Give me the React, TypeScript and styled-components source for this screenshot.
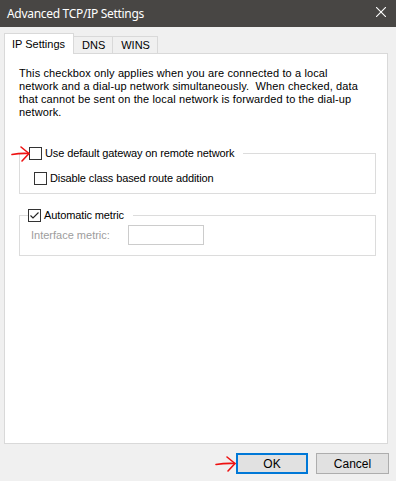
import * as React from "react"
import styled, { createGlobalStyle } from "styled-components"

const GlobalStyle = createGlobalStyle`
html, body {
    margin: 0;
    padding: 0;
    background: #f0f0f0;
}
body {
    font-family: "Liberation Sans", Arial, sans-serif;
    font-size: 11px;
    color: #000;
}
`

const Window = styled("div")`
position: relative;
width: 396px;
height: 481px;
display: flex;
flex-direction: column;
background: #f0f0f0;
overflow: hidden;
`

const TitleBar = styled("div")`
height: 27px;
flex-shrink: 0;
display: flex;
align-items: center;
justify-content: space-between;
padding: 0 10px 0 7px;
background: #484644;
color: #fff;
`

const Title = styled("span")`
font-family: "Noto Sans", "Open Sans", sans-serif;
font-size: 12px;
letter-spacing: -0.3px;
`

const CloseButton = styled("span")`
display: flex;
width: 10px;
height: 10px;
margin-top: -4px;
`

const Body = styled("div")`
flex: 1;
display: flex;
flex-direction: column;
padding: 7px 8px 0 4px;
`

const TabStrip = styled("div")`
display: flex;
align-items: flex-end;
height: 20px;
position: relative;
z-index: 1;
`

const Tab = styled("div")<{ $active?: boolean }>`
box-sizing: border-box;
height: ${p => (p.$active ? "21px" : "18px")};
padding: ${p => (p.$active ? "4px 8px 0 7px" : "2px 7px 0 8px")};
margin-left: ${p => (p.$active ? "0" : "-1px")};
border: 1px solid #d9d9d9;
border-bottom: ${p => (p.$active ? "none" : "1px solid #d9d9d9")};
background: ${p => (p.$active ? "#fff" : "#f0f0f0")};
white-space: nowrap;
font-size: 11px;
line-height: 13px;

&:first-child + & {
    margin-left: 0;
    border-left: none;
}
`

const Panel = styled("div")`
box-sizing: border-box;
width: 384px;
height: 391px;
margin-top: -1px;
border: 1px solid #d9d9d9;
background: #fff;
padding: 13px 11px 0 14px;
display: flex;
flex-direction: column;
`

const Description = styled("p")`
margin: 0;
white-space: nowrap;
line-height: 13px;
letter-spacing: 0.12px;
`

const Group = styled("fieldset")<{ $gap: number }>`
box-sizing: border-box;
width: 357px;
margin: ${p => p.$gap}px 0 0 0;
padding: 0;
border: 1px solid #dcdcdc;
min-inline-size: 0;
`

const Legend = styled("legend")<{ $indent: number }>`
display: flex;
align-items: center;
margin-left: ${p => p.$indent}px;
padding: 0 9px 0 0;
line-height: 13px;
`

const Row = styled("div")<{ $indent: number; $top: number; $bottom: number }>`
display: flex;
align-items: center;
padding: ${p => p.$top}px 0 ${p => p.$bottom}px ${p => p.$indent}px;
`

const CheckRow = styled("label")`
display: flex;
align-items: center;
gap: 3px;
line-height: 13px;
letter-spacing: -0.12px;
`

const Box = styled("span")`
box-sizing: border-box;
display: inline-flex;
width: 13px;
height: 13px;
border: 1px solid #333;
background: #fff;
flex-shrink: 0;
`

const MutedLabel = styled("span")`
color: #9d9d9d;
width: 97px;
`

const MetricInput = styled("span")`
box-sizing: border-box;
display: inline-block;
width: 76px;
height: 20px;
border: 1px solid #cccccc;
background: #fff;
`

const Footer = styled("div")`
display: flex;
justify-content: flex-end;
gap: 8px;
margin-top: 9px;
margin-right: -1px;
`

const Button = styled("span")<{ $primary?: boolean }>`
box-sizing: border-box;
display: flex;
align-items: center;
justify-content: center;
width: ${p => (p.$primary ? "72px" : "73px")};
height: 21px;
background: #e1e1e1;
border: ${p => (p.$primary ? "2px solid #0078d7" : "1px solid #adadad")};
font-size: 12px;
`

const Arrow = styled("svg")<{ $x: number; $y: number }>`
position: absolute;
left: ${p => p.$x}px;
top: ${p => p.$y}px;
z-index: 2;
overflow: visible;
`

const Checkbox: React.FunctionComponent<{ checked?: boolean; label: string }> = ({ checked, label }) => {
    return <CheckRow>
        <Box>
            {checked && <svg width="11" height="11" viewBox="0 0 11 11">
                <path d="M1.5 5.5 L4 8 L9.5 2.5" fill="none" stroke="#222" strokeWidth="1.1" />
            </svg>}
        </Box>
        <span>{label}</span>
    </CheckRow>
}

const RedArrow: React.FunctionComponent<{ x: number; y: number; length: number }> = ({ x, y, length }) => {
    return <Arrow $x={x} $y={y} width={length} height="16" viewBox={`0 0 ${length} 16`}>
        <path d={`M0 8.5 Q${length / 2} 7 ${length} 7.5`} fill="none" stroke="#ee1111" strokeWidth="1.6" strokeLinecap="round" />
        <path d={`M${length - 8} 1 L${length} 7.5 L${length - 7} 15`} fill="none" stroke="#ee1111" strokeWidth="1.6" strokeLinecap="round" strokeLinejoin="round" />
    </Arrow>
}

export default function App() {
    return <>
        <GlobalStyle />
        <Window>
            <TitleBar>
                <Title>Advanced TCP/IP Settings</Title>
                <CloseButton>
                    <svg width="10" height="10" viewBox="0 0 10 10">
                        <path d="M0 0 L10 10 M10 0 L0 10" stroke="#fff" strokeWidth="1.1" />
                    </svg>
                </CloseButton>
            </TitleBar>
            <Body>
                <TabStrip>
                    <Tab $active>IP Settings</Tab>
                    <Tab>DNS</Tab>
                    <Tab>WINS</Tab>
                </TabStrip>
                <Panel>
                    <Description>
                        This checkbox only applies when you are connected to a local<br />
                        network and a dial-up network simultaneously.&nbsp; When checked, data<br />
                        that cannot be sent on the local network is forwarded to the dial-up<br />
                        network.
                    </Description>
                    <Group $gap={28}>
                        <Legend $indent={9}>
                            <Checkbox label="Use default gateway on remote network" />
                        </Legend>
                        <Row $indent={14} $top={12} $bottom={8}>
                            <Checkbox label="Disable class based route addition" />
                        </Row>
                    </Group>
                    <Group $gap={15}>
                        <Legend $indent={8}>
                            <Checkbox checked label="Automatic metric" />
                        </Legend>
                        <Row $indent={11} $top={3} $bottom={10}>
                            <MutedLabel>Interface metric:</MutedLabel>
                            <MetricInput />
                        </Row>
                    </Group>
                </Panel>
                <Footer>
                    <Button $primary>OK</Button>
                    <Button>Cancel</Button>
                </Footer>
            </Body>
            <RedArrow x={12} y={146} length={17} />
            <RedArrow x={216} y={456} length={19} />
        </Window>
    </>
}
